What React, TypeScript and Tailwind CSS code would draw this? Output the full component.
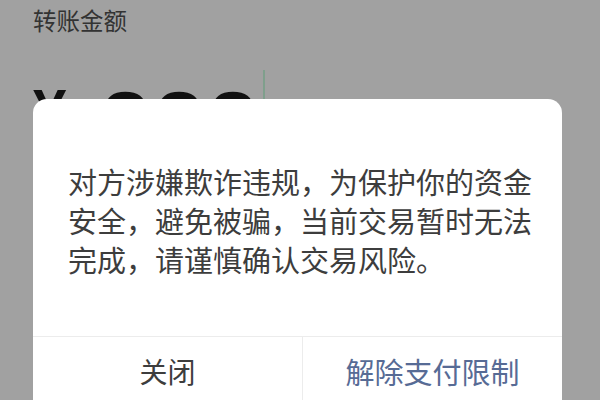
import React from "react";

const cjk = "font-['Noto_Sans_CJK_SC','Noto_Sans',sans-serif]";

const App: React.FC = () => {
  return (
    <div className={`relative h-[400px] w-[600px] overflow-hidden bg-[#a1a1a1] ${cjk}`}>
      {/* page underneath the mask */}
      <div className="px-[33px] pt-[4px]">
        <p className="text-[23.5px] leading-[32px] text-[#333333]">转账金额</p>
        <div className="mt-[30px] flex items-start">
          <span className="mt-[15px] font-['Liberation_Sans',sans-serif] text-[60px] font-bold leading-none text-[#111111]">
            ¥
          </span>
          <span className="ml-[35px] mt-[12px] font-['Liberation_Sans',sans-serif] text-[86px] font-bold leading-none tracking-[6px] text-[#111111]">
            888
          </span>
          <span className="mt-[4px] h-[40px] w-[2px] bg-[#7f9f8c]" />
        </div>
      </div>

      {/* dialog */}
      <div className="absolute left-[33px] top-[99px] w-[529px] rounded-[14px] bg-white">
        <div className="px-[35px] pt-[63px] pb-[57px]">
          <p className="w-[470px] text-[29px] leading-[39px] text-[#3d3d3d]">
            对方涉嫌欺诈违规，为保护你的资金安全，避免被骗，当前交易暂时无法完成，请谨慎确认交易风险。
          </p>
        </div>
        <div className="flex border-t border-[#ececec]">
          <div className="w-[269px] pt-[14px] pb-[40px] text-center text-[28px] leading-[40px] text-[#3d3d3d]">
            关闭
          </div>
          <div className="flex-1 border-l border-[#ececec] pt-[14px] pb-[40px] text-center text-[29px] leading-[40px] text-[#576b95]">
            解除支付限制
          </div>
        </div>
      </div>
    </div>
  );
};

export default App;
